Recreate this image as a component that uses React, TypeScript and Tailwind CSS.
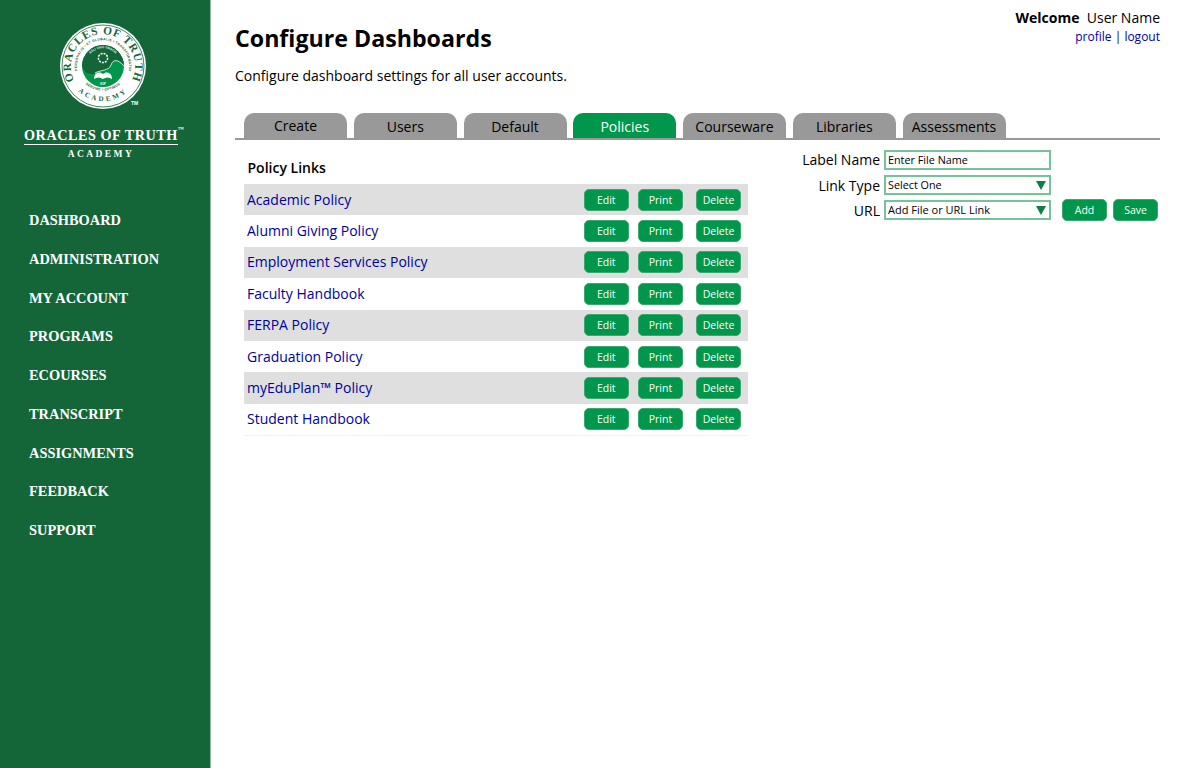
import React from "react";

const navItems = ["DASHBOARD", "ADMINISTRATION", "MY ACCOUNT", "PROGRAMS", "ECOURSES", "TRANSCRIPT", "ASSIGNMENTS", "FEEDBACK", "SUPPORT"];
const tabs = ["Create", "Users", "Default", "Policies", "Courseware", "Libraries", "Assessments"];
const rows = ["Academic Policy", "Alumni Giving Policy", "Employment Services Policy", "Faculty Handbook", "FERPA Policy", "Graduation Policy", "myEduPlan™ Policy", "Student Handbook"];

function Logo() {
  return (
    <svg width="90" height="90" viewBox="0 0 90 90" className="block">
      <defs>
        <path id="topArc" d="M 15.5 57.5 A 32 32 0 1 1 74.5 57.5" />
        <path id="botArc" d="M 13.5 61 A 35.5 35.5 0 0 0 76.5 61" />
        <path id="midArc" d="M 20.2 53 A 26 26 0 1 1 69.8 53" />
        <path id="midBot" d="M 20.5 54 A 27 27 0 0 0 69.5 54" />
        <path id="innerArc" d="M 27.5 43 A 17.6 17.6 0 0 1 62.5 43" />
      </defs>
      <circle cx="45" cy="45" r="43" fill="#fff" />
      <circle cx="45" cy="45" r="41" fill="none" stroke="#146639" strokeWidth="0.8" />
      <circle cx="45" cy="45" r="21" fill="#009649" />
      <path d="M 24 45 A 21 21 0 0 1 66 45 C 60 38 55 38 53 44 C 51 50 42 49 37 52 C 31 55 26 51 24 45 Z" fill="#146639" />
      <path d="M 66 45 C 60 38 55 38 53 44 C 51 50 42 49 37 52" fill="none" stroke="#fff" strokeWidth="0.8" />
      <circle cx="45" cy="37" r="4.6" fill="none" stroke="#fff" strokeWidth="1.5" strokeDasharray="2 1.1" />
      <path d="M36 58 C36 51 42 50 45 53 C48 50 54 51 54 58 C51 56 48 56 45 58 C42 56 39 56 36 58Z" fill="#fff" />
      <text x="45" y="63.5" textAnchor="middle" fontFamily="'Liberation Sans', sans-serif" fontSize="2.8" fontWeight="700" fill="#fff">SOP</text>
      <text fontFamily="'Liberation Serif', serif" fontSize="11.3" fontWeight="700" fill="#146639" letterSpacing="0.9">
        <textPath href="#topArc" startOffset="50%" textAnchor="middle">ORACLES OF TRUTH</textPath>
      </text>
      <text fontFamily="'Liberation Serif', serif" fontSize="7" fontWeight="700" fill="#146639" letterSpacing="2.6">
        <textPath href="#botArc" startOffset="50%" textAnchor="middle">ACADEMY</textPath>
      </text>
      <text fontFamily="'Liberation Sans', sans-serif" fontSize="3.4" fontWeight="700" fill="#146639" letterSpacing="0.25">
        <textPath href="#midArc" startOffset="50%" textAnchor="middle">PERSONALIS • ET GLOBALIS • TRANSFORMATIO</textPath>
      </text>
      <text fontFamily="'Liberation Sans', sans-serif" fontSize="3.4" fontWeight="700" fill="#146639" letterSpacing="0.25">
        <textPath href="#midBot" startOffset="50%" textAnchor="middle">SERVIRE • OPTIMUS</textPath>
      </text>
      <text fontFamily="'Liberation Sans', sans-serif" fontSize="3" fontWeight="700" fill="#fff">
        <textPath href="#innerArc" startOffset="50%" textAnchor="middle">SOLI VIVIT GRACIA</textPath>
      </text>
    </svg>
  );
}

function Btn({ label, w }: { label: string; w: string }) {
  return (
    <button className={`${w} h-[22px] shrink-0 rounded-[5px] border border-[#3aa86f] bg-[#00964b] text-center text-[10.5px] leading-[18px] text-white`}>
      {label}
    </button>
  );
}

function Arrow() {
  return (
    <svg width="10" height="9" viewBox="0 0 10 9" className="mr-[3px]">
      <path d="M0 0H10L5 9Z" fill="#0b8140" />
    </svg>
  );
}

export default function App() {
  return (
    <div className="flex h-[768px] w-[1197px] overflow-hidden bg-white font-['Open_Sans',sans-serif] text-black">
      <aside className="flex w-[211px] shrink-0 flex-col border-r border-[#8fb8a0] bg-[#146639]">
        <div className="relative ml-[58px] mt-[21px] w-[90px]">
          <Logo />
          <span className="absolute left-[73px] top-[79px] font-['Liberation_Sans',sans-serif] text-[5px] font-bold text-white">TM</span>
        </div>
        <div className="ml-[24px] mt-[16px] w-[154px] text-center font-['Liberation_Serif',serif] text-white">
          <div className="whitespace-nowrap border-b border-white text-[14.2px] font-bold leading-[17px] tracking-[0.55px]">
            ORACLES OF TRUTH<sup className="align-top text-[6px] leading-[10px]">™</sup>
          </div>
          <div className="mt-[3px] text-[9.5px] font-bold leading-[12px] tracking-[2.4px]">ACADEMY</div>
        </div>
        <nav className="mt-[52px] flex w-full flex-col gap-[21.25px] pl-[29px] font-['Liberation_Serif',serif] text-[14.4px] font-bold leading-[17.5px] text-white">
          {navItems.map((n) => (
            <div key={n} className="whitespace-nowrap">{n}</div>
          ))}
        </nav>
      </aside>

      <main className="relative flex-1 pl-[24px] pr-[37px]">
        <div className="absolute right-[37px] top-[8px] text-right">
          <div className="text-[14px] leading-[20px]">
            <b className="font-bold">Welcome</b>&nbsp; User Name
          </div>
          <div className="mt-[1px] text-[12px] leading-[16px]">
            <a className="text-[#00009c]">profile</a> | <a className="text-[#00009c]">logout</a>
          </div>
        </div>

        <h1 className="mt-[22px] text-[23.2px] font-bold leading-[32px]">Configure Dashboards</h1>
        <p className="mt-[12px] text-[14px] leading-[20px]">Configure dashboard settings for all user accounts.</p>

        <div className="mt-[27px] flex h-[27px] gap-[6.75px] border-b-2 border-[#999] pl-[9px]">
          {tabs.map((t) => (
            <div
              key={t}
              className={`flex h-[25px] w-[103px] items-center justify-center rounded-t-[10px] text-[14px] ${t === "Create" ? "" : "pt-[1px]"} ${t === "Policies" ? "bg-[#00964b] text-white" : "bg-[#999] text-black"}`}
            >
              {t}
            </div>
          ))}
        </div>

        <div className="flex">
          <section className="ml-[9px] w-[504px] shrink-0">
            <div className="h-[44px] pl-[3.5px] pt-[18px] text-[14px] font-semibold leading-[20px]">Policy Links</div>
            <div className="border-b border-[#f1f1f1]">
              {rows.map((r, i) => (
                <div key={r} className={`flex h-[31.4px] items-center pl-[3px] ${i % 2 === 0 ? "bg-[#dfdfdf]" : "bg-white"}`}>
                  <a className="flex-1 pb-[1px] text-[14px] text-[#00009c]">{r}</a>
                  <div className="flex items-center pr-[7px]">
                    <Btn label="Edit" w="w-[45.5px]" />
                    <div className="w-[9px]" />
                    <Btn label="Print" w="w-[45px]" />
                    <div className="w-[13px]" />
                    <Btn label="Delete" w="w-[45px]" />
                  </div>
                </div>
              ))}
            </div>
          </section>

          <section className="ml-[49px] flex flex-1 flex-col gap-[5px] pt-[10px]">
            <div className="flex h-[20px] items-center">
              <label className="flex w-[87px] justify-end whitespace-nowrap pr-[4px] text-[14px] leading-[20px]">Label Name</label>
              <div className="flex h-[20px] w-[167px] items-center border-2 border-[#76c29b] pl-[2px] text-[10.8px]">Enter File Name</div>
            </div>
            <div className="flex h-[20px] items-center">
              <label className="flex w-[87px] justify-end pr-[4px] pt-[1px] text-[14px] leading-[20px]">Link Type</label>
              <div className="flex h-[20px] w-[167px] items-center justify-between border-2 border-[#76c29b] pl-[2px] text-[10.8px]">
                <span>Select One</span>
                <Arrow />
              </div>
            </div>
            <div className="flex h-[20px] items-center">
              <label className="flex w-[87px] justify-end pr-[4px] pt-[1px] text-[14px] leading-[20px]">URL</label>
              <div className="flex h-[20px] w-[167px] items-center justify-between border-2 border-[#76c29b] pl-[2px] text-[11px]">
                <span>Add File or URL Link</span>
                <Arrow />
              </div>
              <div className="ml-[11px] flex gap-[6px]">
                <Btn label="Add" w="w-[45px]" />
                <Btn label="Save" w="w-[45px]" />
              </div>
            </div>
          </section>
        </div>
      </main>
    </div>
  );
}
